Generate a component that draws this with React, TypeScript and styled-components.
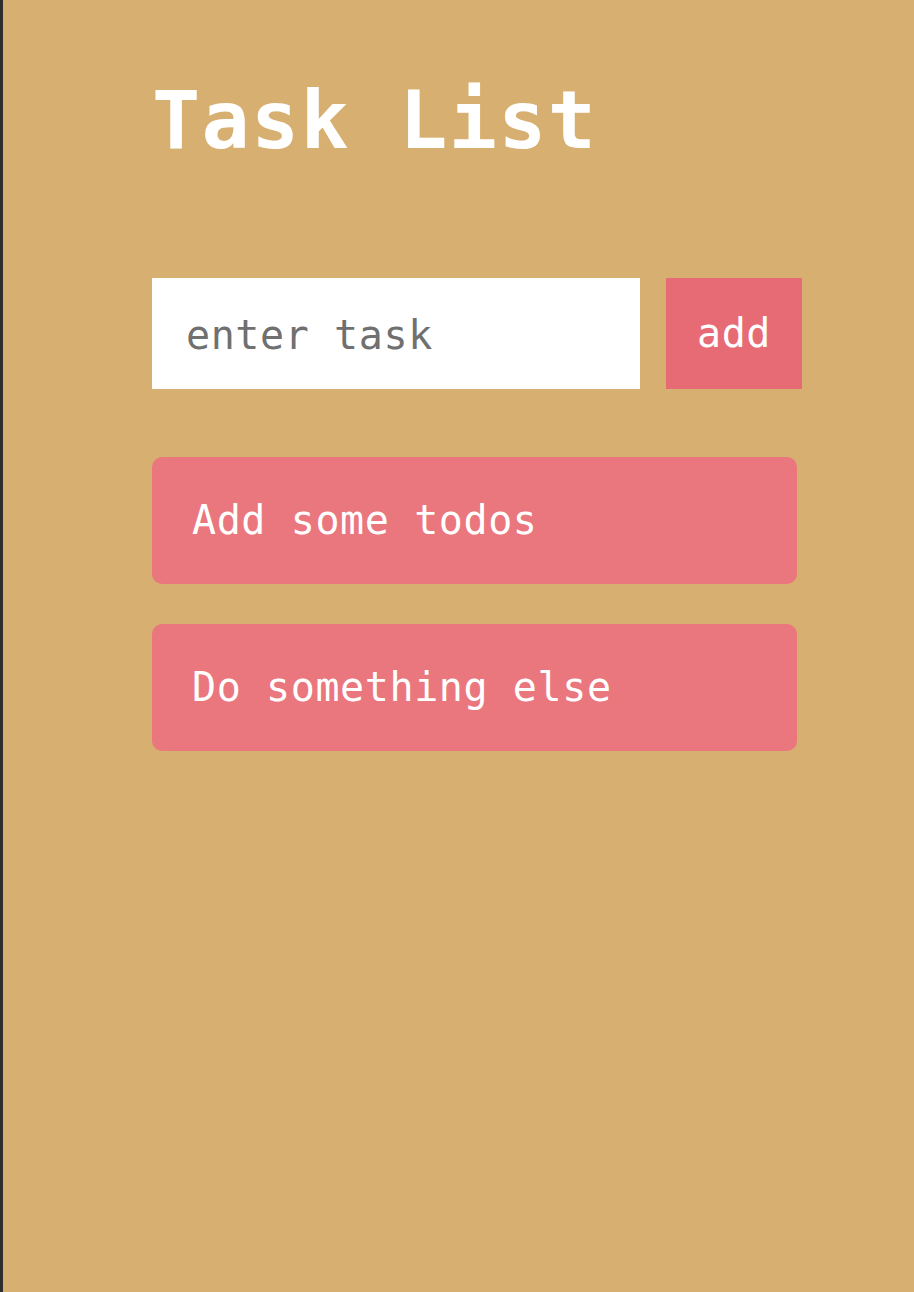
import React, { useState } from "react";
import styled, { createGlobalStyle } from "styled-components";

const GlobalStyle = createGlobalStyle`
  html, body {
    margin: 0;
    padding: 0;
    background: #d7af70;
  }
  * { box-sizing: border-box; }
`;

const Page = styled.div`
  min-height: 1292px;
  background: #d7af70;
  border-left: 3px solid #2e2e2e;
  padding: 81px 0 0 149px;
  font-family: "DejaVu Sans Mono", "Liberation Mono", monospace;
`;

const Container = styled.div`
  width: 650px;
  display: flex;
  flex-direction: column;
`;

const Title = styled.h1`
  margin: 0;
  font-size: 80px;
  line-height: 80px;
  font-weight: bold;
  letter-spacing: 1.3px;
  color: #ffffff;
`;

const Form = styled.form`
  margin-top: 117px;
  display: flex;
  gap: 26px;
  height: 111px;
`;

const Input = styled.input`
  flex: 1 1 auto;
  min-width: 0;
  width: 488px;
  height: 111px;
  border: none;
  outline: none;
  background: #ffffff;
  padding: 2px 0 0 34px;
  font-family: inherit;
  font-size: 40px;
  letter-spacing: 0.6px;
  color: #333;
  &::placeholder {
    color: #707070;
  }
`;

const AddButton = styled.button`
  flex: 0 0 136px;
  width: 136px;
  height: 111px;
  border: none;
  background: #e76b74;
  color: #ffffff;
  font-family: inherit;
  font-size: 40px;
  letter-spacing: 0.6px;
  padding: 0 0 2px;
  cursor: pointer;
`;

const List = styled.ul`
  list-style: none;
  margin: 68px 0 0;
  padding: 0;
  width: 645px;
  display: flex;
  flex-direction: column;
  gap: 40px;
`;

const Item = styled.li`
  height: 127px;
  border-radius: 10px;
  background: #ea777e;
  color: #ffffff;
  display: flex;
  align-items: center;
  padding: 0 0 2px 40px;
  font-size: 40px;
  letter-spacing: 0.6px;
`;

export default function App() {
  const [task, setTask] = useState("");
  const [todos, setTodos] = useState<string[]>(["Add some todos", "Do something else"]);

  const onSubmit = (e: React.FormEvent) => {
    e.preventDefault();
    if (!task.trim()) return;
    setTodos([...todos, task.trim()]);
    setTask("");
  };

  return (
    <>
      <GlobalStyle />
      <Page>
        <Container>
          <Title>Task List</Title>
          <Form onSubmit={onSubmit}>
            <Input
              placeholder="enter task"
              value={task}
              onChange={(e) => setTask(e.target.value)}
            />
            <AddButton type="submit">add</AddButton>
          </Form>
          <List>
            {todos.map((t, i) => (
              <Item key={i}>{t}</Item>
            ))}
          </List>
        </Container>
      </Page>
    </>
  );
}
